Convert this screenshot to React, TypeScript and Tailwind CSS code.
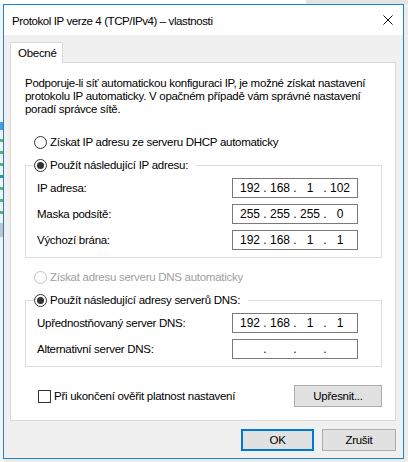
import { Fragment } from "react";

const Radio = ({ checked, disabled }: { checked?: boolean; disabled?: boolean }) => (
  <span
    className={`flex h-[13px] w-[13px] shrink-0 items-center justify-center rounded-full border bg-white ${
      disabled ? "border-[#c2c2c2]" : "border-[#333333]"
    }`}
  >
    {checked && <span className="h-[7px] w-[7px] rounded-full bg-[#333333]" />}
  </span>
);

const IpField = ({ octets }: { octets: string[] }) => (
  <div className="flex h-[20px] w-[126px] shrink-0 items-center border border-[#7a7a7a] bg-white pl-[6px] text-[12px] tracking-normal">
    {octets.map((octet, i) => (
      <Fragment key={i}>
        {i > 0 && <span className="w-[8px] text-center">.</span>}
        <span className="w-[22px] text-center">{octet}</span>
      </Fragment>
    ))}
  </div>
);

const FieldRow = ({ label, octets }: { label: string; octets: string[] }) => (
  <div className="flex items-center justify-between">
    <span>{label}</span>
    <IpField octets={octets} />
  </div>
);

const WinButton = ({ label, primary, width }: { label: string; primary?: boolean; width: string }) => (
  <button
    className={`flex h-[22px] items-center justify-center bg-[#e1e1e1] ${width} ${
      primary ? "border-2 border-[#0078d7]" : "border border-[#adadad]"
    }`}
  >
    {label}
  </button>
);

export default function App() {
  return (
    <div className="flex h-[462px] w-[408px] flex-col overflow-hidden bg-[#ececec] font-['Liberation_Sans',Arial,sans-serif] text-[11.5px] leading-[16px] tracking-[-0.28px] text-black">
      {/* window behind, peeking over the top */}
      <div className="flex h-[4px] shrink-0">
        <div className="w-[306px] overflow-hidden bg-white pl-[15px]">
          <div className="-mt-[12px] text-[#8a8a8a]">vlastnosti</div>
        </div>
        <div className="flex-1 bg-[#e4e4e4]" />
      </div>

      <div className="flex flex-1">
        {/* strip of the window behind, on the left */}
        <div className="flex w-[3px] shrink-0 flex-col gap-[9px] bg-[#f4f4f4] pt-[118px]">
          <div className="h-[8px] bg-[#4a9be0]" />
          <div className="h-[3px] bg-[#5cb85c]" />
          <div className="h-[3px] bg-[#5cb85c]" />
          <div className="h-[3px] bg-[#5cb85c]" />
          <div className="h-[3px] bg-[#2a9a9a]" />
          <div className="h-[3px] bg-[#5cb85c]" />
          <div className="h-[3px] bg-[#5cb85c]" />
          <div className="h-[3px] bg-[#5cb85c]" />
          <div className="h-[14px] bg-[#c4c4c4]" />
        </div>

        {/* dialog */}
        <div className="flex h-[455px] w-[401px] shrink-0 flex-col border border-[#1883d7] bg-[#f0f0f0]">
          <div className="flex h-[30px] shrink-0 items-center justify-between bg-white pl-[8px] pr-[10px]">
            <span className="mt-[1px] text-[11.5px] tracking-[-0.4px]">Protokol IP verze 4 (TCP/IPv4) – vlastnosti</span>
            <svg width="10" height="10" viewBox="0 0 10 10" className="mt-[-1px]">
              <path d="M0.5 0.5 L9.5 9.5 M9.5 0.5 L0.5 9.5" stroke="#111" strokeWidth="1" />
            </svg>
          </div>

          <div className="flex flex-1 flex-col pl-[6px] pr-[7px] pt-[7px]">
            <div className="relative z-10 -mb-px flex h-[21px] w-[53px] items-center border border-b-0 border-[#d9d9d9] bg-white pl-[7px]">
              Obecné
            </div>

            <div className="flex h-[359px] flex-col border border-[#d9d9d9] bg-white">
              <p className="ml-[14px] mt-[14px] whitespace-nowrap leading-[13px]">
                Podporuje-li síť automatickou konfiguraci IP, je možné získat nastavení
                <br />
                protokolu IP automaticky. V opačném případě vám správné nastavení
                <br />
                poradí správce sítě.
              </p>

              <label className="ml-[23px] mt-[18px] flex h-[16px] items-center gap-[3px]">
                <Radio />
                <span>Získat IP adresu ze serveru DHCP automaticky</span>
              </label>

              <fieldset className="ml-[14px] mr-[13px] mt-[7px] border border-[#dcdcdc] pb-[7px] pr-[23px]">
                <legend className="ml-[8px] flex h-[16px] items-center gap-[3px] pr-[8px]">
                  <Radio checked />
                  <span>Použít následující IP adresu:</span>
                </legend>
                <div className="mt-[5px] flex flex-col gap-[6px] pl-[11px]">
                  <FieldRow label="IP adresa:" octets={["192", "168", "1", "102"]} />
                  <FieldRow label="Maska podsítě:" octets={["255", "255", "255", "0"]} />
                  <FieldRow label="Výchozí brána:" octets={["192", "168", "1", "1"]} />
                </div>
              </fieldset>

              <label className="ml-[23px] mt-[11px] flex h-[16px] items-center gap-[3px] text-[#a0a0a0]">
                <Radio disabled />
                <span>Získat adresu serveru DNS automaticky</span>
              </label>

              <fieldset className="ml-[14px] mr-[13px] mt-[7px] border border-[#dcdcdc] pb-[7px] pr-[23px]">
                <legend className="ml-[8px] flex h-[16px] items-center gap-[3px] pr-[8px]">
                  <Radio checked />
                  <span>Použít následující adresy serverů DNS:</span>
                </legend>
                <div className="mt-[5px] flex flex-col gap-[6px] pl-[11px]">
                  <FieldRow label="Upřednostňovaný server DNS:" octets={["192", "168", "1", "1"]} />
                  <FieldRow label="Alternativní server DNS:" octets={["", "", "", ""]} />
                </div>
              </fieldset>

              <div className="ml-[27px] mr-[13px] mt-[18px] flex items-center justify-between">
                <label className="flex items-center gap-[3px]">
                  <span className="h-[13px] w-[13px] border border-[#333333] bg-white" />
                  <span>Při ukončení ověřit platnost nastavení</span>
                </label>
                <WinButton label="Upřesnit..." width="w-[88px]" />
              </div>
            </div>

            <div className="mt-[8px] flex justify-end gap-[8px]">
              <WinButton label="OK" primary width="w-[73px]" />
              <WinButton label="Zrušit" width="w-[74px]" />
            </div>
          </div>
        </div>
      </div>
    </div>
  );
}
